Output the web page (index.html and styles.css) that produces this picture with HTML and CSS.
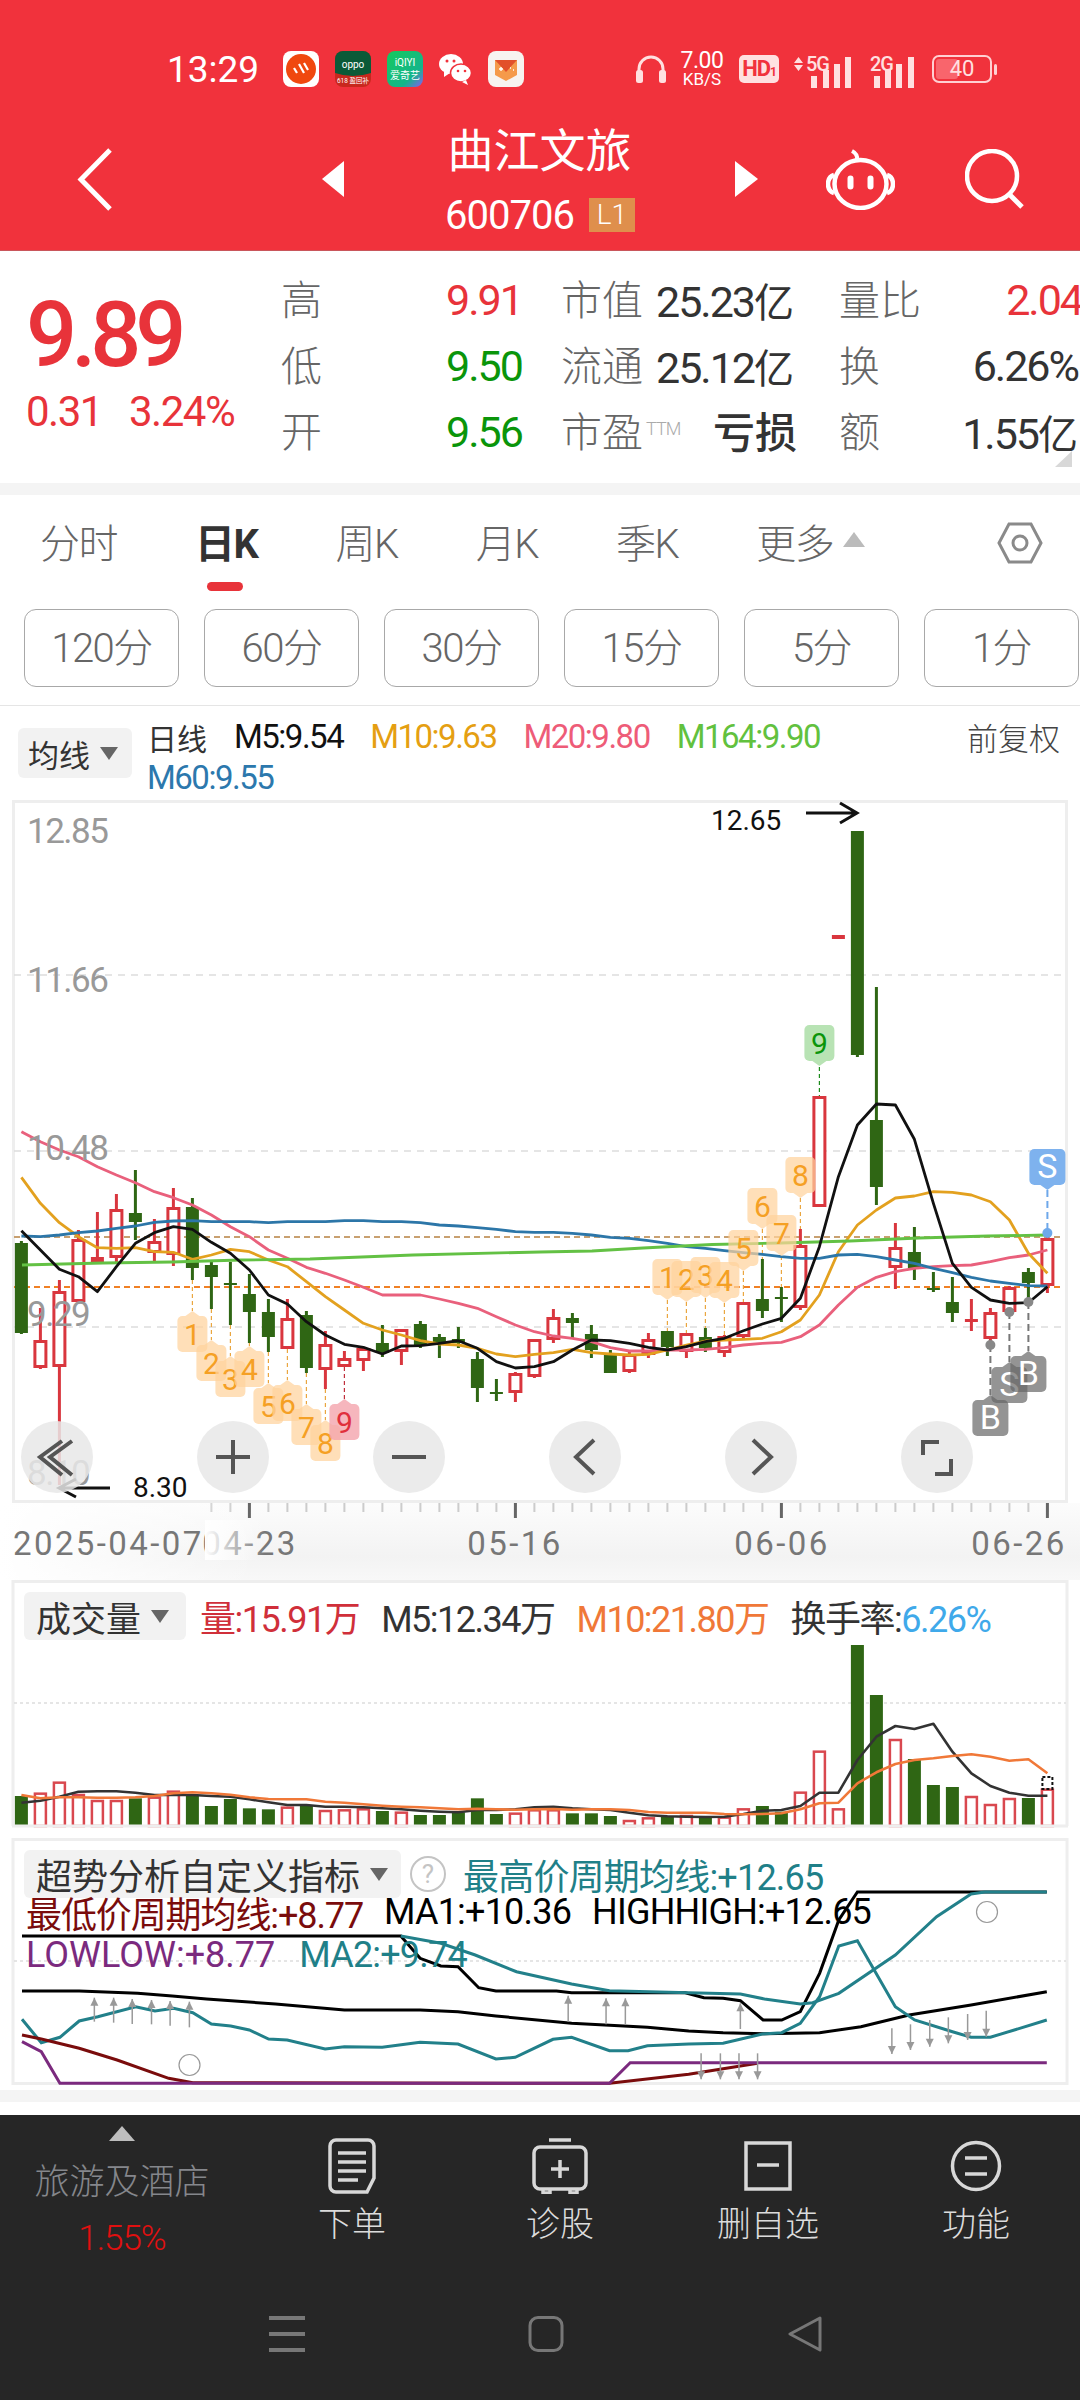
FILE: index.html
```html
<!DOCTYPE html>
<html lang="zh-CN">
<head>
  <meta charset="UTF-8">
  <title>曲江文旅 600706</title>
  <link rel="stylesheet" href="styles.css">
</head>
<body>

<header class="top">
  <div class="status">
    <span class="time">13:29</span>
    <div class="apps">
      <svg width="36" height="36" viewBox="0 0 36 36"><rect width="36" height="36" rx="8" fill="#fff"/><circle cx="18" cy="18" r="15" fill="#f0480f"/><path d="M11 17l3 5M16 13l5 9M21 12l4 7" stroke="#fff" stroke-width="2.2" fill="none"/></svg>
      <svg width="36" height="36" viewBox="0 0 36 36"><rect width="36" height="36" rx="8" fill="#c8281e"/><path d="M0 8a8 8 0 0 1 8-8h20a8 8 0 0 1 8 8v14q-18 6-36 0z" fill="#0b5a38"/><text x="18" y="17" class="ico-txt" font-size="10">oppo</text><text x="18" y="32" class="ico-txt" font-size="6.500" fill="#f6c77a">618 盈回补</text></svg>
      <svg width="36" height="36" viewBox="0 0 36 36"><defs><linearGradient id="qy" x1="0" y1="0" x2="1" y2="1"><stop offset="0" stop-color="#16c95c"/><stop offset=".7" stop-color="#14b58a"/><stop offset="1" stop-color="#8a5bf5"/></linearGradient></defs><rect width="36" height="36" rx="8" fill="url(#qy)"/><text x="18" y="15" class="ico-txt" font-size="10">iQIYI</text><text x="18" y="28" class="ico-txt" font-size="10">爱奇艺</text></svg>
      <svg width="33" height="36" viewBox="0 0 33 36"><ellipse cx="12" cy="13" rx="12" ry="10" fill="#fff"/><path d="M5 20l0 6 6-4z" fill="#fff"/><ellipse cx="22" cy="22" rx="10.500" ry="9" fill="#fff" stroke="#f1323c" stroke-width="1.500"/><path d="M27 29l2 5-6-3z" fill="#fff"/><circle cx="8" cy="10" r="1.500" fill="#f1323c"/><circle cx="15" cy="10" r="1.500" fill="#f1323c"/><circle cx="19" cy="20" r="1.300" fill="#f1323c"/><circle cx="26" cy="20" r="1.300" fill="#f1323c"/></svg>
      <svg width="36" height="36" viewBox="0 0 36 36"><rect width="36" height="36" rx="8" fill="#f7f3f0"/><path d="M7 9h22v15l-11 6-11-6z" fill="#f59a4a"/><path d="M7 9h22l-11 12z" fill="#e2502a"/><path d="M11 18h4M13 16v4M22 17h1M25 19h1" stroke="#fff" stroke-width="1.400"/></svg>
    </div>
    <div class="sys">
      <svg class="headset" width="30" height="28" viewBox="0 0 30 28"><path d="M3 18V14a12 12 0 0 1 24 0v4" fill="none" stroke="#ffe0e0" stroke-width="3"/><rect x="0" y="15" width="7" height="13" rx="2.500" fill="#ffe0e0"/><rect x="23" y="15" width="7" height="13" rx="2.500" fill="#ffe0e0"/></svg>
      <div class="speed"><b>7.00</b><small>KB/S</small></div>
      <span class="hd">HD<i>1</i></span>
      <svg class="sig5" width="57" height="38" viewBox="0 -6 57 38"><path d="M0 7l4.500-6 4.500 6zM0 9l4.500 6 4.500-6z" fill="#ffe0e0"/><text x="12" y="15" class="sig-txt">5G</text><rect x="17" y="20" width="6" height="12" fill="#ffe0e0"/><rect x="29" y="14" width="6" height="18" fill="#ffe0e0"/><rect x="40" y="8" width="6" height="24" fill="#ffe0e0"/><rect x="51" y="1" width="6" height="31" fill="#ffe0e0"/></svg>
      <svg class="sig2" width="45" height="38" viewBox="0 -6 45 38"><text x="0" y="15" class="sig-txt">2G</text><rect x="4" y="20" width="6" height="12" fill="#ffe0e0"/><rect x="15" y="14" width="6" height="18" fill="#ffe0e0"/><rect x="26" y="8" width="6" height="24" fill="#ffe0e0"/><rect x="38" y="1" width="6" height="31" fill="#ffe0e0"/></svg>
      <div class="batt"><span class="batt-fill"></span><span class="batt-num">40</span></div>
    </div>
  </div>
  <div class="nav">
    <svg class="back" width="35" height="63" viewBox="0 0 35 63"><path d="M33 2L4 31.500 33 61" fill="none" stroke="#fff" stroke-width="5"/></svg>
    <span class="tri-l"></span>
    <div class="stock">
      <div class="stock-name">曲江文旅</div>
      <div class="stock-code">600706<span class="lv">L1</span></div>
    </div>
    <span class="tri-r"></span>
    <svg class="robot" width="69" height="62" viewBox="0 0 69 62" fill="none" stroke="#fff" stroke-width="4.500"><path d="M31 12q1-6-5-9" stroke-width="4"/><ellipse cx="34.500" cy="36" rx="26" ry="24"/><path d="M8 27q-6 2-6 9t6 9M61 27q6 2 6 9t-6 9"/><rect x="23" y="29" width="3" height="11" rx="1.500" fill="#fff" stroke-width="3"/><rect x="43" y="29" width="3" height="11" rx="1.500" fill="#fff" stroke-width="3"/></svg>
    <svg class="search" width="60" height="60" viewBox="0 0 60 60"><circle cx="27" cy="27" r="25" fill="none" stroke="#fff" stroke-width="4.500"/><path d="M45 46l12 12" stroke="#fff" stroke-width="5"/></svg>
  </div>
</header>

<section class="quote">
  <div class="last">
    <div class="last-price">9.89</div>
    <div class="last-chg"><span class="chg-abs">0.31</span><span>3.24%</span></div>
  </div>
  <div class="qgrid">
    <span class="lab">高</span><span class="val up">9.91</span><span class="lab">市值</span><span class="val">25.23<i>亿</i></span><span class="lab">量比</span><span class="val up end">2.04</span>
    <span class="lab">低</span><span class="val down">9.50</span><span class="lab">流通</span><span class="val">25.12<i>亿</i></span><span class="lab">换</span><span class="val end">6.26%</span>
    <span class="lab">开</span><span class="val down">9.56</span><span class="lab">市盈<sup>TTM</sup></span><span class="val loss">亏损</span><span class="lab">额</span><span class="val end">1.55<i>亿</i></span>
  </div>
</section>

<div class="sep"></div>

<nav class="tabs">
  <span class="tab">分时</span>
  <span class="tab on">日K</span>
  <span class="tab">周K</span>
  <span class="tab">月K</span>
  <span class="tab">季K</span>
  <span class="tab">更多<em class="tri-up"></em></span>
  <svg class="hex" width="46" height="44" viewBox="0 0 46 44"><path d="M2 22L12 3h22l10 19-10 19H12z" fill="none" stroke="#8a8a8a" stroke-width="3"/><circle cx="23" cy="22" r="7" fill="none" stroke="#8a8a8a" stroke-width="3"/></svg>
</nav>

<div class="periods">
  <span class="period">120分</span>
  <span class="period">60分</span>
  <span class="period">30分</span>
  <span class="period">15分</span>
  <span class="period">5分</span>
  <span class="period">1分</span>
</div>

<div class="legend">
  <span class="chip chip-ma">均线<em class="tri-down"></em></span>
  <div class="legend-text">
    <div class="legend-row">
      <span class="dayline">日线</span>
      <span class="c-black">M5:9.54</span>
      <span class="c-orange">M10:9.63</span>
      <span class="c-pink">M20:9.80</span>
      <span class="c-green">M164:9.90</span>
      <span class="adjust">前复权</span>
    </div>
    <div class="legend-row"><span class="c-blue">M60:9.55</span></div>
  </div>
</div>

<section class="kline">
  <svg id="kchart" class="plot" width="1080" height="780" viewBox="0 800 1080 780"></svg>
  <div class="tools">
    <span class="tool"><svg width="72" height="72" viewBox="0 0 72 72"><path d="M41 20L19 36l22 18M51 20L29 36l22 18"/></svg></span>
    <span class="tool"><svg width="72" height="72" viewBox="0 0 72 72"><path d="M19 36h34M36 19v34"/></svg></span>
    <span class="tool"><svg width="72" height="72" viewBox="0 0 72 72"><path d="M19 36h34"/></svg></span>
    <span class="tool"><svg width="72" height="72" viewBox="0 0 72 72"><path d="M45 19L27 36l18 17"/></svg></span>
    <span class="tool"><svg width="72" height="72" viewBox="0 0 72 72"><path d="M28 19l18 17-18 17"/></svg></span>
    <span class="tool"><svg width="72" height="72" viewBox="0 0 72 72"><path d="M22 34V21h16M50 38v15H34"/></svg></span>
  </div>
</section>

<section class="vol">
  <svg id="vchart" class="plot" width="1080" height="258" viewBox="0 1580 1080 258"></svg>
  <div class="ind-row vol-row">
    <span class="chip chip-vol">成交量<em class="tri-down"></em></span>
    <span class="v-red">量:15.91万</span>
    <span class="v-dark">M5:12.34万</span>
    <span class="v-orange">M10:21.80万</span>
    <span class="v-dark">换手率:<span class="v-sky">6.26%</span></span>
  </div>
</section>

<section class="ind">
  <svg id="ichart" class="plot" width="1080" height="252" viewBox="0 1838 1080 252"></svg>
  <div class="ind-row">
    <span class="chip chip-ind">超势分析自定义指标<em class="tri-down"></em></span>
    <span class="help">?</span>
    <span class="t-teal">最高价周期均线:+12.65</span>
  </div>
  <div class="ind-line line2">
    <span class="t-maroon">最低价周期均线:+8.77</span>
    <span class="t-black">MA1:+10.36</span>
    <span class="t-black">HIGHHIGH:+12.65</span>
  </div>
  <div class="ind-line line3">
    <span class="t-purple">LOWLOW:+8.77</span>
    <span class="t-teal">MA2:+9.74</span>
  </div>
</section>

<div class="sep"></div>
<div class="gap-white"></div>

<footer class="foot">
  <div class="foot-main">
    <div class="sector">
      <em class="sector-tri"></em>
      <div class="sector-name">旅游及酒店</div>
      <div class="sector-pct">1.55%</div>
    </div>
    <div class="act">
      <svg width="48" height="56" viewBox="0 0 48 56"><path d="M8 2h32a6 6 0 0 1 6 6v32l-7 14H8a6 6 0 0 1-6-6V8a6 6 0 0 1 6-6zM10 15h28M10 24h28M10 33h28M10 42h20"/></svg>
      <span>下单</span>
    </div>
    <div class="act">
      <svg width="56" height="56" viewBox="0 0 56 56"><path d="M17 2h22M8 9h40a6 6 0 0 1 6 6v30a6 6 0 0 1-6 6H8a6 6 0 0 1-6-6V15a6 6 0 0 1 6-6zM28 22v18M19 31h18M11 51v4h7v-4M38 51v4h7v-4"/></svg>
      <span>诊股</span>
    </div>
    <div class="act">
      <svg width="48" height="52" viewBox="0 0 48 52"><path d="M2 3h44v46H2zM13 25h22"/></svg>
      <span>删自选</span>
    </div>
    <div class="act">
      <svg width="52" height="54" viewBox="0 0 52 54"><circle cx="26" cy="27" r="23.500"/><path d="M15 19h22M15 35h22"/></svg>
      <span>功能</span>
    </div>
  </div>
  <div class="sysnav">
    <svg width="36" height="36" viewBox="0 0 36 36"><path d="M0 2h36M0 18h36M0 34h36" stroke="#777" stroke-width="4" fill="none"/></svg>
    <svg width="36" height="36" viewBox="0 0 36 36"><rect x="2" y="1.500" width="32" height="33" rx="8" fill="none" stroke="#777" stroke-width="3"/></svg>
    <svg width="36" height="36" viewBox="0 0 36 36"><path d="M33 2L3 18l30 16z" fill="none" stroke="#777" stroke-width="3" stroke-linejoin="round"/></svg>
  </div>
</footer>

<script>
  // all chart coordinates are page pixels: the svg viewBoxes start at the panel's page y
  const X = i => 21.4 + 19 * i;

  // [high, body top, body bottom, low, g = green | r = hollow red | R = solid red]
  const candles = [
    [1241,1243,1333,1334,"g"],[1308,1340,1368,1369,"r"],[1280,1291,1367,1485,"r"],[1230,1239,1302,1302,"r"],
    [1212,1257,1263,1263,"R"],[1194,1209,1258,1263,"r"],[1170,1213,1222,1240,"g"],[1219,1241,1253,1262,"r"],
    [1188,1207,1255,1266,"r"],[1198,1207,1268,1280,"g"],[1262,1265,1277,1309,"g"],[1262,1283,1285,1325,"g"],
    [1274,1294,1312,1343,"g"],[1299,1312,1337,1352,"g"],[1299,1318,1349,1349,"r"],[1311,1315,1368,1373,"g"],
    [1331,1344,1370,1389,"r"],[1351,1358,1367,1367,"r"],[1348,1348,1361,1371,"r"],[1325,1343,1353,1357,"g"],
    [1329,1329,1352,1365,"r"],[1321,1324,1345,1348,"g"],[1334,1337,1342,1358,"g"],[1327,1339,1343,1348,"g"],
    [1352,1359,1388,1402,"g"],[1379,1392,1394,1401,"g"],[1372,1373,1393,1402,"r"],[1339,1339,1377,1378,"r"],
    [1309,1317,1340,1343,"r"],[1313,1318,1323,1338,"g"],[1325,1334,1350,1358,"g"],[1350,1355,1373,1373,"g"],
    [1352,1354,1372,1373,"r"],[1333,1339,1355,1358,"r"],[1331,1331,1347,1356,"g"],[1333,1333,1352,1358,"r"],
    [1328,1337,1348,1352,"g"],[1335,1336,1353,1357,"r"],[1302,1302,1337,1339,"r"],[1259,1299,1311,1318,"g"],
    [1287,1297,1299,1322,"g"],[1229,1245,1308,1310,"r"],[1096,1096,1207,1207,"r"],[935,935,939,939,"R"],
    [831,831,1055,1057,"g"],[987,1120,1187,1205,"g"],[1223,1247,1268,1289,"r"],[1227,1252,1268,1280,"g"],
    [1272,1288,1289,1292,"g"],[1277,1302,1313,1322,"g"],[1299,1319,1322,1331,"R"],[1308,1312,1339,1345,"r"],
    [1286,1287,1312,1315,"r"],[1268,1272,1283,1303,"g"],[1236,1238,1286,1293,"r"]
  ];

  // moving averages, one y per candle: first 28 read at y=1100+v/3, the rest at y=1200+v/3
  const ma = (a, b) => a.map(v => 1100 + v / 3).concat(b.map(v => 1200 + v / 3)).map((y, i) => [X(i), y]);
  const m5 = ma(
    [392,450,508,530,575,500,430,398,380,388,427,460,510,585,612,665,705,733,742,762,738,737,730,722,745,785,804,800],
    [485,450,420,422,430,442,450,440,425,415,392,372,355,295,140,-70,-225,-288,-285,-182,10,190,262,300,310,308,260]);
  const m10 = ma(
    [232,310,368,410,443,445,443,455,457,478,465,448,455,480,500,545,590,630,670,690,705,722,732,735,745,762,770,763],
    [458,448,458,462,465,463,450,435,423,420,418,415,395,360,285,155,75,30,-6,-12,-25,-23,-15,5,60,160,220]);
  const m20 = ma(
    [95,125,150,170,200,225,248,275,293,315,345,380,410,450,475,502,520,540,562,585,585,585,597,610,625,650,675,695],
    [408,415,425,443,453,453,450,450,448,443,435,430,427,410,375,315,262,232,215,205,200,197,195,185,173,165,150]);
  const m60 = ma(
    [408,410,405,398,393,385,378,367,363,362,365,365,365,368,365,365,365,362,362,365,365,368,375,378,383,388,395,397],
    [97,100,105,112,115,122,130,140,145,152,158,163,170,175,175,165,163,170,180,190,205,218,232,243,250,257,258]);
  const m164 = [[22,1265],[103,1263],[172,1262],[241,1260],[310,1259],[413,1255],[540,1252],[592,1251],[643,1248],[712,1244.5],[781,1243],[850,1241],[919,1238],[988,1236],[1047,1235]];

  const line = (cls, pts) => `<polyline class="${cls}" points="${pts.map(p => p[0].toFixed(1) + "," + p[1].toFixed(1)).join(" ")}"/>`;
  const seg = (cls, x1, y1, x2, y2) => `<line class="${cls}" x1="${x1}" y1="${y1}" x2="${x2}" y2="${y2}"/>`;

  function candleSvg(c, i) {
    const x = X(i), [hi, top, bot, lo, t] = c;
    const colour = t === "g" ? "k-green" : "k-red";
    let s = seg("wick " + colour, x, hi, x, lo);
    if (t === "r") s += `<rect class="k-hollow" x="${x - 5.5}" y="${top + 1.5}" width="11" height="${bot - top - 3}"/>`;
    else s += `<rect class="${t === "g" ? "fill-green" : "fill-red"}" x="${x - 6.5}" y="${top}" width="13" height="${Math.max(bot - top, 2)}"/>`;
    return s;
  }

  // price-marker tags, dir -1 = tip pointing up at the candle above, 1 = tip down
  function tag(i, y, txt, dir, kind) {
    const x = X(i), w = kind === "t-orange" || kind === "t-pink" || kind === "t-lime" ? 30 : 36, h = 36;
    const body = dir < 0 ? y + 5 : y;
    const tip = dir < 0 ? `${x - 7},${y + 5} ${x},${y} ${x + 7},${y + 5}` : `${x - 7},${y + h} ${x},${y + h + 5} ${x + 7},${y + h}`;
    return `<g class="${kind}"><rect x="${x - w / 2}" y="${body}" width="${w}" height="${h}" rx="5"/><polygon points="${tip}"/><text x="${x}" y="${body + 29}">${txt}</text></g>`;
  }

  const lowTags = [[9,1311,"1"],[10,1340,"2"],[11,1356,"3"],[12,1346,"4"],[13,1383,"5"],[14,1380,"6"],[15,1404,"7"],[16,1420,"8"]];
  const highTags = [[34,1259,"1"],[35,1261,"2"],[36,1257,"3"],[37,1262,"4"],[38,1230,"5"],[39,1188,"6"],[40,1215,"7"],[41,1157,"8"]];

  function drawKline() {
    let s = `<defs><linearGradient id="strip" x1="0" y1="0" x2="0" y2="1"><stop offset="0" stop-color="#fcfcfc"/><stop offset=".7" stop-color="#f3f3f3"/><stop offset="1" stop-color="#f8f8f8"/></linearGradient>
      <linearGradient id="fade"><stop offset="0" stop-color="#fff"/><stop offset="1" stop-color="#fff" stop-opacity="0"/></linearGradient></defs>`;
    s += `<rect x="0" y="1503" width="1080" height="77" fill="url(#strip)"/>`;
    for (let i = 10; i < 55; i++) s += seg("tick", X(i), 1503, X(i), 1512);
    s += `<rect x="0" y="1503" width="260" height="77" fill="url(#fade)"/>`;
    s += `<rect class="frame" x="13.5" y="801.5" width="1053" height="700"/>`;
    [975, 1151, 1327].forEach(y => s += seg("grid", 14, y, 1066, y));
    s += seg("price-tan", 14, 1237, 1062, 1237) + seg("price-orange", 14, 1287, 1062, 1287);

    [12, 26, 40, 54].forEach(i => s += seg("tick-major", X(i), 1503, X(i), 1518));

    lowTags.forEach(t => s += seg("link-orange", X(t[0]), candles[t[0]][3], X(t[0]), t[1]));
    s += seg("link-red", X(17), 1367, X(17), 1399);
    highTags.forEach(t => s += seg("link-orange", X(t[0]), t[1] + 41, X(t[0]), candles[t[0]][0]));
    s += seg("link-green", X(42), 1067, X(42), 1096);

    s += candles.map(candleSvg).join("");

    s += line("ma c1", m20) + line("ma c2", m10) + line("ma c3", m60) + line("ma c4", m164) + line("ma c5", m5);

    lowTags.forEach(t => s += tag(t[0], t[1], t[2], -1, "t-orange"));
    s += tag(17, 1399, "9", -1, "t-pink");
    highTags.forEach(t => s += tag(t[0], t[1], t[2], 1, "t-orange"));
    s += tag(42, 1025, "9", 1, "t-lime");

    // trade marks on the last few days
    s += seg("link-blue", X(54), 1190, X(54), 1233) + `<circle class="dot-blue" cx="${X(54)}" cy="1233" r="5"/>`;
    [[51,1345,1395],[52,1312,1362],[53,1302,1351]].forEach(d => {
      s += seg("link-grey", X(d[0]), d[1], X(d[0]), d[2]) + `<circle class="dot-grey" cx="${X(d[0])}" cy="${d[1]}" r="5"/>`;
    });
    s += tag(52, 1362, "S", -1, "t-grey") + tag(53, 1351, "B", -1, "t-grey") + tag(51, 1395, "B", -1, "t-grey");
    s += tag(54, 1149, "S", 1, "t-blue");

    [["12.85",843],["11.66",992],["10.48",1160],["9.29",1326],["8.10",1485]].forEach(l => {
      s += `<text class="y-label" x="27" y="${l[1]}">${l[0]}</text>`;
    });

    s += `<text class="peak" x="711" y="830">12.65</text><path class="arrow" d="M806 813h50M840 803l17 10-17 10"/>`;
    s += `<text class="peak" x="133" y="1497">8.30</text><path class="arrow" d="M110 1488H60M76 1479l-17 9 17 9"/>`;

    s += `<text class="date" x="13" y="1555">2025-04-07</text>`;
    s += `<text class="date" x="250" y="1555" text-anchor="middle">04-23</text>`;
    s += `<rect x="205" y="1520" width="60" height="40" fill="url(#fade)"/>`;
    s += `<text class="date" x="515" y="1555" text-anchor="middle">05-16</text>`;
    s += `<text class="date" x="782" y="1555" text-anchor="middle">06-06</text>`;
    s += `<text class="date" x="1019" y="1555" text-anchor="middle">06-26</text>`;
    document.getElementById("kchart").innerHTML = s;
  }

  function drawVolume() {
    // bar tops and average lines read at y=1560+v/3
    const yv = v => 1560 + v / 3;
    const tops = [708,698,665,702,720,720,715,710,692,705,738,717,745,748,740,737,750,748,745,753,755,765,765,757,715,762,758,748,748,760,760,768,780,772,768,765,772,770,745,738,755,695,572,745,255,405,537,597,675,681,708,732,714,714,686];
    const v5 = [728,722,710,695,694,694,698,705,705,705,708,710,718,727,735,735,740,740,742,745,748,752,755,757,750,750,748,742,740,745,748,750,758,766,769,770,771,770,762,752,750,738,698,698,600,530,498,507,491,575,640,678,698,707,707];
    const v10 = [705,715,712,712,713,713,712,708,700,697,700,704,712,717,718,718,725,728,733,737,740,742,745,748,746,748,749,748,747,749,748,748,750,756,758,758,758,762,763,762,760,748,730,728,670,637,612,600,595,588,583,590,602,598,640];
    let s = `<path class="frame" d="M13 1826V1581.500H1067V1826"/>` + seg("grid-dot", 14, 1703, 1066, 1703);
    tops.forEach((t, i) => {
      const x = X(i), y = yv(t), green = candles[i][4] === "g";
      s += green
        ? `<rect class="fill-green" x="${x - 6.5}" y="${y}" width="13" height="${1826 - y}"/>`
        : `<rect class="v-hollow" x="${x - 5.5}" y="${y + 1}" width="11" height="${1825 - y}"/>`;
    });
    s += `<rect class="v-mark" x="${X(54) - 5}" y="1777" width="10" height="12"/>`;
    s += line("vma d1", v5.map((v, i) => [X(i), yv(v)])) + line("vma d2", v10.map((v, i) => [X(i), yv(v)]));
    s += seg("frame", 12, 1826, 1068, 1826);
    document.getElementById("vchart").innerHTML = s;
  }

  function drawIndicator() {
    // points read at x=v/1.452, y=1830+v/3
    const P = a => a.map(p => [p[0] / 1.452, 1830 + p[1] / 3]);
    const high = [[32,318],[582,318],[610,385],[640,408],[665,410],[695,473],[720,483],[808,483],[830,488],[995,488],[1022,503],[1050,505],[1075,512],[1108,570],[1135,570],[1162,545],[1190,430],[1218,270],[1245,186],[1520,186]];
    const ma1 = [[32,483],[115,483],[200,490],[250,498],[300,507],[400,522],[500,540],[610,540],[665,545],[720,558],[830,580],[940,592],[1000,603],[1050,608],[1110,611],[1190,608],[1250,590],[1320,555],[1410,525],[1520,485]];
    const teal1 = [[582,318],[640,340],[690,375],[750,425],[830,462],[885,482],[1000,488],[1075,492],[1110,507],[1162,522],[1180,518],[1218,490],[1300,375],[1360,260],[1410,192],[1430,186],[1520,186]];
    const teal2 = [[32,568],[60,638],[87,622],[115,573],[142,560],[197,530],[225,543],[252,535],[280,548],[307,582],[335,588],[362,600],[390,627],[417,630],[472,657],[500,650],[555,652],[610,637],[665,642],[720,687],[748,682],[803,628],[830,622],[885,662],[912,662],[940,647],[1000,642],[1050,640],[1107,612],[1135,608],[1162,580],[1190,500],[1218,348],[1245,332],[1300,530],[1328,570],[1383,605],[1410,622],[1438,622],[1520,570]];
    const maroon = [[32,615],[60,627],[115,655],[170,690],[245,745],[280,758],[885,760],[1000,733],[1100,700]];
    const purple = [[32,635],[60,665],[87,760],[885,760],[915,698],[1520,698]];
    const ups = [[137,503,575],[165,503,578],[192,507,582],[220,510,583],[247,513,587],[275,515,592],[825,497,575],[880,505,583],[908,505,583],[1075,520,597]];
    const downs = [[1018,670,748],[1046,670,748],[1073,670,748],[1100,670,748],[1295,595,672],[1322,583,660],[1350,570,650],[1377,562,640],[1405,552,630],[1432,542,620]];

    let s = `<rect class="frame" x="13" y="1839.500" width="1054" height="244"/>` + seg("grid-dot", 14, 1961, 1066, 1961);
    s += line("ind-thick", P(high)) + line("ind-thick", P(ma1)) + line("ind-teal", P(teal1)) + line("ind-teal", P(teal2));
    s += line("ind-maroon", P(maroon)) + line("ind-purple", P(purple));
    ups.forEach(a => {
      const x = a[0] / 1.452, t = 1830 + a[1] / 3, b = 1830 + a[2] / 3;
      s += seg("sig-arrow", x, t, x, b) + `<polygon class="sig-head" points="${x - 4},${t + 8} ${x},${t} ${x + 4},${t + 8}"/>`;
    });
    downs.forEach(a => {
      const x = a[0] / 1.452, t = 1830 + a[1] / 3, b = 1830 + a[2] / 3;
      s += seg("sig-arrow", x, t, x, b) + `<polygon class="sig-head" points="${x - 4},${b - 8} ${x},${b} ${x + 4},${b - 8}"/>`;
    });
    s += `<circle class="ring" cx="189.500" cy="2065" r="10.500"/><circle class="ring" cx="987" cy="1912" r="10.500"/>`;
    document.getElementById("ichart").innerHTML = s;
  }

  drawKline();
  drawVolume();
  drawIndicator();
</script>

</body>
</html>
```

FILE: styles.css
```css
html, body {
  margin: 0;
  padding: 0;
}
body {
  width: 1080px;
  height: 2400px;
  overflow: hidden;
  background: #fff;
  font-family: Roboto, "Noto Sans CJK SC", sans-serif;
  color: #333;
}

/* red header */
.top {
  height: 250px;
  background: #f1323c;
  border-bottom: 1px solid #c9565b;
  overflow: hidden;
}
.status {
  display: flex;
  align-items: center;
  height: 36px;
  margin-top: 51px;
  padding-left: 167px;
}
.time {
  width: 116px;
  font-size: 37px;
  color: #fff;
}
.apps {
  display: flex;
  align-items: center;
  gap: 16px;
}
.ico-txt {
  font-family: Roboto, "Noto Sans CJK SC", sans-serif;
  fill: #fff;
  text-anchor: middle;
}
.sys {
  display: flex;
  align-items: center;
  margin-left: 112px;
  color: #ffe0e0;
}
.speed {
  display: flex;
  flex-direction: column;
  align-items: center;
  width: 46px;
  margin-left: 13px;
}
.speed b {
  font-size: 23px;
  font-weight: 400;
  line-height: 20px;
  letter-spacing: -0.5px;
  color: #fff;
}
.speed small {
  font-size: 17px;
  line-height: 17px;
  color: #fff;
}
.hd {
  width: 40px;
  height: 28px;
  margin-left: 14px;
  background: #ffe0e0;
  border-radius: 5px;
  font-size: 22px;
  font-weight: 700;
  line-height: 28px;
  letter-spacing: -1px;
  text-align: center;
  color: #f1323c;
}
.hd i {
  font-size: 12px;
  font-style: normal;
}
.sig5 {
  margin-left: 15px;
}
.sig2 {
  margin-left: 19px;
}
.sig-txt {
  font-family: Roboto, sans-serif;
  font-size: 20px;
  font-weight: 500;
  letter-spacing: -1px;
  fill: #ffe0e0;
}
.batt {
  position: relative;
  width: 60px;
  height: 28px;
  margin-left: 17px;
  border: 2px solid #ffd0d2;
  border-radius: 7px;
  box-sizing: border-box;
}
.batt::after {
  content: "";
  position: absolute;
  right: -7px;
  top: 7px;
  width: 3px;
  height: 11px;
  background: #ffd0d2;
  border-radius: 2px;
}
.batt-fill {
  position: absolute;
  left: 2px;
  top: 2px;
  bottom: 2px;
  width: 22px;
  background: #f9656c;
  border-radius: 3px;
}
.batt-num {
  position: absolute;
  left: 0;
  right: 0;
  top: 0;
  font-size: 22px;
  line-height: 24px;
  text-align: center;
  color: #ffe0e0;
}
.nav {
  display: flex;
  align-items: center;
  height: 122px;
  margin-top: 31px;
}
.back {
  margin-left: 77px;
}
.tri-l, .tri-r {
  width: 0;
  height: 0;
  border-top: 18px solid transparent;
  border-bottom: 18px solid transparent;
}
.tri-l {
  margin-left: 210px;
  border-right: 22px solid #fff;
}
.tri-r {
  border-left: 23px solid #fff;
}
.stock {
  align-self: flex-start;
  width: 391px;
  padding-top: 2px;
  color: #fff;
}
.stock-name {
  font-family: "Noto Sans CJK SC", sans-serif;
  font-size: 46px;
  line-height: 54px;
  text-align: center;
}
.stock-code {
  display: flex;
  align-items: center;
  height: 34px;
  margin-top: 24px;
  padding-left: 101px;
  font-size: 40px;
  letter-spacing: -1px;
}
.lv {
  width: 46px;
  height: 34px;
  margin-left: 15px;
  background: #df8f4c;
  font-size: 28px;
  font-weight: 300;
  line-height: 34px;
  letter-spacing: 0;
  text-align: center;
}
.robot {
  margin-left: 68px;
}
.search {
  margin-left: 70px;
}

/* quote panel */
.quote {
  position: relative;
  display: flex;
  height: 232px;
}
.quote::after {
  content: "";
  position: absolute;
  right: 8px;
  bottom: 16px;
  border-left: 17px solid transparent;
  border-bottom: 16px solid #d8d8d8;
}
.last {
  width: 281px;
  padding: 40px 0 0 26px;
  box-sizing: border-box;
  color: #e8333a;
}
.last-price {
  font-size: 90px;
  font-weight: 500;
  line-height: 90px;
  letter-spacing: -6px;
}
.last-chg {
  display: flex;
  margin-top: 8px;
  font-size: 42px;
  line-height: 46px;
  letter-spacing: -1.5px;
}
.chg-abs {
  width: 103px;
}
.qgrid {
  display: grid;
  grid-template-columns: 165px 115px 95px 183px 160px 81px;
  grid-auto-rows: 66px;
  align-items: center;
  padding-top: 13px;
}
.lab {
  font-family: "Noto Sans CJK SC", sans-serif;
  font-size: 41px;
  font-weight: 300;
  color: #666;
  white-space: nowrap;
}
.lab sup {
  margin-left: 3px;
  font-family: Roboto, sans-serif;
  font-size: 18px;
  letter-spacing: -1px;
  color: #aaa;
  vertical-align: 12px;
  line-height: 0;
}
.val {
  padding-top: 6px;
  font-size: 43px;
  letter-spacing: -2px;
  white-space: nowrap;
  color: #333;
}
.val i {
  font-family: "Noto Sans CJK SC", sans-serif;
  font-size: 40px;
  font-style: normal;
  letter-spacing: 0;
}
.val.up {
  color: #e8333a;
}
.val.down {
  color: #0a950a;
}
.val.end {
  justify-self: end;
  margin-right: 2px;
}
.val.up.end {
  margin-right: -2px;
}
.val.loss {
  margin-left: 57px;
  padding-top: 0;
  font-family: "Noto Sans CJK SC", sans-serif;
  font-size: 42px;
  font-weight: 500;
  letter-spacing: 0;
}
.sep {
  height: 12px;
  background: #f4f4f4;
}
.gap-white {
  height: 13px;
}

/* period tabs */
.tabs {
  display: flex;
  align-items: flex-start;
  gap: 78px;
  height: 105px;
  padding: 28px 37px 0 40px;
  box-sizing: border-box;
  font-size: 40px;
  line-height: 44px;
  font-weight: 300;
  letter-spacing: -1.5px;
  color: #666;
}
.tab {
  position: relative;
  white-space: nowrap;
}
.tab.on {
  font-weight: 700;
  color: #333;
}
.tab.on::after {
  content: "";
  position: absolute;
  left: 12px;
  top: 59px;
  width: 36px;
  height: 9px;
  background: #e8333a;
  border-radius: 5px;
}
.tri-up {
  display: inline-block;
  margin-left: 10px;
  border-left: 11px solid transparent;
  border-right: 11px solid transparent;
  border-bottom: 15px solid #bbb;
  vertical-align: 11px;
}
.hex {
  margin-left: auto;
  margin-top: -2px;
}
.periods {
  display: flex;
  gap: 25px;
  height: 78px;
  margin-top: 9px;
  padding-left: 24px;
  margin-bottom: 18px;
}
.period {
  flex: 0 0 155px;
  border: 1px solid #a8a8a8;
  border-radius: 12px;
  box-sizing: border-box;
  font-size: 40px;
  font-weight: 300;
  line-height: 78px;
  letter-spacing: -1.5px;
  text-align: center;
  color: #666;
}

/* moving average legend */
.legend {
  display: flex;
  align-items: flex-start;
  height: 95px;
  box-sizing: border-box;
  padding: 10px 20px 0 18px;
  border-top: 1px solid #e5e5e5;
}
.chip {
  display: inline-flex;
  align-items: center;
  background: #f2f2f2;
  border-radius: 6px;
  box-sizing: border-box;
  font-family: "Noto Sans CJK SC", sans-serif;
  letter-spacing: 0;
  color: #333;
}
.chip-ma {
  width: 114px;
  height: 50px;
  margin-top: 12px;
  padding-left: 10px;
  font-size: 31px;
}
.tri-down {
  margin-left: 10px;
  border-left: 9px solid transparent;
  border-right: 9px solid transparent;
  border-top: 13px solid #666;
}
.legend-text {
  flex: 1;
  margin-left: 15px;
}
.legend-row {
  display: flex;
  align-items: center;
  gap: 27px;
  height: 41px;
  font-size: 33px;
  letter-spacing: -1.5px;
  white-space: nowrap;
}
.dayline {
  font-family: "Noto Sans CJK SC", sans-serif;
  font-size: 30px;
  letter-spacing: 0;
  color: #333;
}
.adjust {
  margin-left: auto;
  font-family: "Noto Sans CJK SC", sans-serif;
  font-size: 31px;
  font-weight: 300;
  letter-spacing: 0;
  color: #444;
}
.c-black { color: #111; }
.c-orange { color: #e59f12; }
.c-pink { color: #ee5c78; }
.c-green { color: #62c13e; }
.c-blue { color: #2c78ad; }

/* chart panels */
.kline, .vol, .ind {
  position: relative;
}
.kline {
  height: 780px;
}
.vol {
  height: 258px;
  padding-top: 12px;
  box-sizing: border-box;
}
.ind {
  height: 252px;
  padding-top: 12px;
  box-sizing: border-box;
}
.plot {
  position: absolute;
  left: 0;
  top: 0;
}
.tools {
  position: absolute;
  left: 21px;
  top: 621px;
  display: flex;
  gap: 104px;
}
.tool {
  width: 72px;
  height: 72px;
  background: rgba(232, 232, 232, 0.85);
  border-radius: 50%;
}
.tool svg {
  display: block;
  fill: none;
  stroke: #555;
  stroke-width: 4;
}
.frame {
  fill: none;
  stroke: #eee;
  stroke-width: 3;
}
.grid {
  stroke: #ddd;
  stroke-width: 1.5;
  stroke-dasharray: 7 6;
}
.grid-dot {
  stroke: #ddd;
  stroke-width: 1.5;
  stroke-dasharray: 3 3;
}
.price-tan {
  stroke: #c8a070;
  stroke-width: 2;
  stroke-dasharray: 6 4;
}
.price-orange {
  stroke: #f08024;
  stroke-width: 2;
  stroke-dasharray: 6 4;
}
.tick {
  stroke: #ccc;
  stroke-width: 2;
}
.tick-major {
  stroke: #666;
  stroke-width: 3;
}
.wick {
  stroke-width: 3;
}
.k-green { stroke: #2f6614; }
.k-red { stroke: #d9363e; }
.k-hollow {
  fill: #fff;
  stroke: #d9363e;
  stroke-width: 3;
}
.fill-green { fill: #2f6614; }
.fill-red { fill: #d9363e; }
.ma {
  fill: none;
  stroke-width: 2.8;
  stroke-linejoin: round;
}
.c1 { stroke: #e9607c; }
.c2 { stroke: #e3a11f; }
.c3 { stroke: #2c76a8; }
.c4 { stroke: #63c144; }
.c5 { stroke: #111; }
.link-orange, .link-red, .link-green {
  stroke-width: 1.2;
  stroke-dasharray: 4 3;
}
.link-orange { stroke: #eaa640; }
.link-red { stroke: #c0303c; }
.link-green { stroke: #1c8c1c; }
.link-blue {
  stroke: #6ea8ea;
  stroke-width: 2;
  stroke-dasharray: 7 4;
}
.link-grey {
  stroke: #777;
  stroke-width: 2;
  stroke-dasharray: 7 4;
}
.dot-blue { fill: #6ea8ea; }
.dot-grey { fill: #888; }

.t-orange rect, .t-orange polygon { fill: #ffd39c; fill-opacity: 0.72; }
.t-pink rect, .t-pink polygon { fill: #f4a4ac; fill-opacity: 0.8; }
.t-lime rect, .t-lime polygon { fill: #b8e3b4; }
.t-grey rect, .t-grey polygon { fill: #666; fill-opacity: 0.7; }
.t-blue rect, .t-blue polygon { fill: #7eb2ee; }
.t-orange text, .t-pink text, .t-lime text, .t-grey text, .t-blue text {
  font-family: Roboto, sans-serif;
  font-size: 30px;
  text-anchor: middle;
}
.t-orange text { fill: #f5a024; }
.t-pink text { fill: #e0303c; }
.t-lime text { fill: #0a950a; }
.t-grey text, .t-blue text {
  font-size: 34px;
  fill: #fff;
}
.y-label {
  font-family: Roboto, sans-serif;
  font-size: 35px;
  letter-spacing: -1.5px;
  fill: #999;
}
.peak {
  font-family: Roboto, sans-serif;
  font-size: 28px;
  fill: #111;
}
.arrow {
  fill: none;
  stroke: #111;
  stroke-width: 3;
}
.date {
  font-family: Roboto, sans-serif;
  font-size: 33px;
  letter-spacing: 2.4px;
  fill: #777;
}

/* volume and indicator legends */
.ind-row, .ind-line {
  position: relative;
  display: flex;
  align-items: center;
  padding-left: 24px;
  font-size: 36px;
  letter-spacing: -0.8px;
  white-space: nowrap;
}
.ind-row {
  gap: 17px;
  height: 48px;
}
.vol-row {
  gap: 22px;
  letter-spacing: -1.5px;
}
.ind-line {
  gap: 21px;
  height: 36px;
  padding-left: 26px;
}
.line2 {
  margin-top: -4px;
}
.line3 {
  height: 40px;
  margin-top: 5px;
}
.chip-vol {
  width: 162px;
  height: 48px;
  padding-left: 12px;
  margin-right: -8px;
  font-size: 35px;
}
.chip-ind {
  width: 377px;
  height: 48px;
  padding-left: 12px;
  margin-right: -8px;
  font-size: 36px;
}
.v-red { color: #d02f3a; }
.v-dark { color: #333; }
.v-orange { color: #f07838; }
.v-sky { color: #3fa9ea; }
.help {
  width: 32px;
  height: 32px;
  border: 2px solid #c4c4c4;
  border-radius: 50%;
  font-size: 26px;
  line-height: 32px;
  letter-spacing: 0;
  text-align: center;
  color: #c4c4c4;
}
.t-teal { color: #1f8088; }
.t-maroon { color: #7a0c0c; letter-spacing: -1.1px; }
.t-black { color: #000; }
.t-purple { color: #7b2a7e; letter-spacing: 0; }
.line3 .t-teal { margin-left: 3px; }
.v-hollow {
  fill: #fff;
  stroke: #d9484f;
  stroke-width: 2.5;
}
.v-mark {
  fill: none;
  stroke: #111;
  stroke-width: 2;
  stroke-dasharray: 3 2;
}
.vma {
  fill: none;
  stroke-width: 2.6;
  stroke-linejoin: round;
}
.d1 { stroke: #333; }
.d2 { stroke: #f07838; }
.ind-thick {
  fill: none;
  stroke: #000;
  stroke-width: 3;
}
.ind-teal {
  fill: none;
  stroke: #22808a;
  stroke-width: 3;
}
.ind-maroon {
  fill: none;
  stroke: #7a0c0c;
  stroke-width: 3;
}
.ind-purple {
  fill: none;
  stroke: #7b2a7e;
  stroke-width: 3;
}
.sig-arrow {
  stroke: #999;
  stroke-width: 1.5;
}
.sig-head { fill: #999; }
.ring {
  fill: #fff;
  stroke: #999;
  stroke-width: 1.2;
}

/* bottom bar */
.foot {
  height: 285px;
  background: #262626;
}
.foot-main {
  display: flex;
  height: 201px;
}
.sector {
  display: flex;
  flex-direction: column;
  align-items: center;
  width: 248px;
  padding: 11px 4px 0 0;
  box-sizing: border-box;
}
.sector-tri {
  border-left: 13px solid transparent;
  border-right: 13px solid transparent;
  border-bottom: 15px solid #bdbdbd;
}
.sector-name {
  margin-top: 18px;
  font-family: "Noto Sans CJK SC", sans-serif;
  font-size: 35px;
  font-weight: 300;
  line-height: 40px;
  color: #85878c;
}
.sector-pct {
  margin-top: 20px;
  font-size: 35px;
  font-weight: 300;
  line-height: 40px;
  letter-spacing: -1px;
  color: #e01010;
}
.act {
  display: flex;
  flex-direction: column;
  align-items: center;
  width: 208px;
  padding-top: 23px;
  box-sizing: border-box;
}
.act svg {
  height: 56px;
  fill: none;
  stroke: #d8d8d8;
  stroke-width: 3.5;
}
.act span {
  margin-top: 8px;
  font-family: "Noto Sans CJK SC", sans-serif;
  font-size: 34px;
  font-weight: 300;
  line-height: 40px;
  color: #dcdcdc;
}
.sysnav {
  display: flex;
  gap: 223px;
  padding-left: 269px;
}
```
